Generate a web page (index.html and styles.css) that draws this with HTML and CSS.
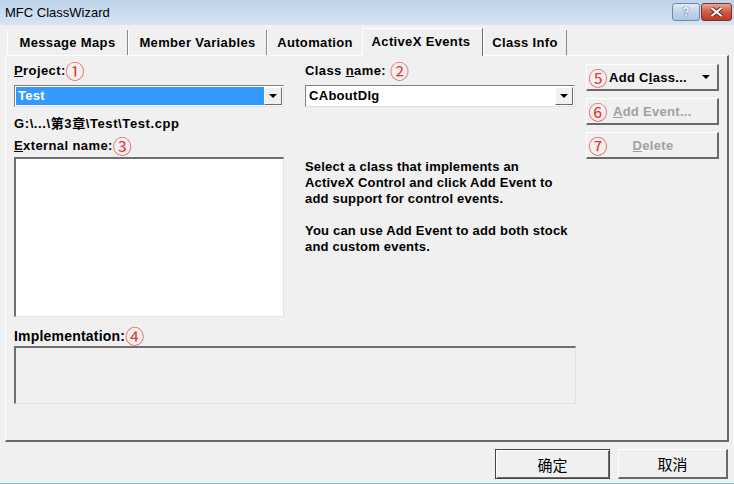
FILE: index.html
```html
<!DOCTYPE html>
<html>
<head>
<meta charset="utf-8">
<link rel="stylesheet" href="styles.css">
</head>
<body>
<div class="window">
  <div class="titlebar">
    <span class="title">MFC ClassWizard</span>
    <div class="caption-btns">
      <span class="cbtn help">?</span>
      <span class="cbtn close"><svg width="13" height="10" viewBox="0 0 13 10"><path d="M1.5 1 L11.5 9 M11.5 1 L1.5 9" stroke="#5a1a10" stroke-width="3.6"/><path d="M1.5 1 L11.5 9 M11.5 1 L1.5 9" stroke="#fff" stroke-width="2.2"/></svg></span>
    </div>
  </div>
  <div class="tabs">
    <div class="tab t1">Message Maps</div>
    <div class="tab t2">Member Variables</div>
    <div class="tab t3">Automation</div>
    <div class="tab t4 active">ActiveX Events</div>
    <div class="tab t5">Class Info</div>
  </div>
  <div class="panel">
    <div class="top">
      <div class="col-left">
        <div class="label"><u>P</u>roject:<span class="num">①</span></div>
        <div class="combo selected"><span class="val">Test</span><span class="drop"><i></i></span></div>
        <div class="path">G:\...\第3章\Test\Test.cpp</div>
        <div class="label ext"><u>E</u>xternal name:<span class="num">③</span></div>
        <div class="listbox"></div>
      </div>
      <div class="col-mid">
        <div class="label">Class <u>n</u>ame: <span class="num">②</span></div>
        <div class="combo"><span class="val">CAboutDlg</span><span class="drop"><i></i></span></div>
        <div class="info">
          <p>Select a class that implements an<br>ActiveX Control and click Add Event to<br>add support for control events.</p>
          <p>You can use Add Event to add both stock<br>and custom events.</p>
        </div>
      </div>
      <div class="col-right">
        <div class="btn"><span class="num">⑤</span><span class="btxt">Add C<u>l</u>ass...</span><span class="arrow"></span></div>
        <div class="btn disabled"><span class="num">⑥</span><span class="btxt">&nbsp;<u>A</u>dd Event...</span></div>
        <div class="btn disabled"><span class="num">⑦</span><span class="btxt center"><u>D</u>elete</span></div>
      </div>
    </div>
    <div class="impl-label">Implementation:<span class="num">④</span></div>
    <div class="impl-box"></div>
  </div>
  <div class="footer">
    <div class="pbtn default">确定</div>
    <div class="pbtn">取消</div>
  </div>
  <div class="bottomline"></div>
</div>
</body>
</html>
```
FILE: styles.css
```css
* { box-sizing: border-box; }
html, body { margin: 0; padding: 0; }
body {
  width: 734px; height: 484px; overflow: hidden;
  background: #f0f0f0;
  font-family: "Liberation Sans", Arial, sans-serif;
  color: #000;
}
.window { width: 734px; height: 484px; display: flex; flex-direction: column; }
.titlebar {
  height: 25px; flex: none;
  background: linear-gradient(#bed3ea, #d6e4f3);
  display: flex; align-items: center; justify-content: space-between;
  padding: 0 2px 0 5px;
}
.title { font-size: 13px; color: #000; white-space: nowrap; }
.caption-btns { display: flex; gap: 1px; align-self: flex-start; margin-top: 3px; }
.cbtn {
  height: 18px; display: flex; align-items: center; justify-content: center;
  border: 1px solid #6d88a8; border-radius: 3px;
}
.help { width: 28px; background: linear-gradient(#e0eaf6, #c2d5ea 50%, #aec6e2); color: #fff; font-size: 12px; font-weight: bold; text-shadow: 0 0 1px #3a5478, 0 0 1px #3a5478; }
.close { width: 31px; background: linear-gradient(#e8a897, #d05a44 50%, #c03a22); border-color: #7a3328; }

.tabs { height: 30px; flex: none; display: flex; align-items: flex-end; padding-left: 7px; }
.tab {
  height: 25px; display: flex; align-items: center; justify-content: center;
  font-weight: bold; font-size: 13px; letter-spacing: 0.35px;
  border-left: 1px solid #fff; border-right: 1px solid #8a8a8a;
}
.t1 { width: 121px; }
.t2 { width: 139px; }
.t3 { width: 95px; border-right: none; }
.t4 { width: 121px; height: 28px; border-top: 1px solid #fff; border-left: 1px solid #fff; border-right: 1px solid #696969; margin-bottom: -1px; background: #f0f0f0; position: relative; z-index: 1; padding-bottom: 2px; padding-right: 3px; }
.t5 { width: 84px; }

.panel {
  flex: none; height: 387px; margin: 0 5px 0 5px;
  border-top: 1px solid #fff; border-left: 1px solid #fff;
  border-right: 2px solid #696969; border-bottom: 2px solid #696969;
  padding: 6px 0 0 8px;
  display: flex; flex-direction: column;
}
.top { display: flex; height: 255px; }
.col-left { width: 270px; display: flex; flex-direction: column; }
.col-mid { width: 270px; margin-left: 21px; display: flex; flex-direction: column; }
.col-right { width: 133px; margin-left: 11px; padding-top: 2px; display: flex; flex-direction: column; gap: 7px; }

.label { font-weight: bold; font-size: 13px; letter-spacing: 0.4px; height: 18px; line-height: 18px; white-space: nowrap; }
.num { color: #e8362c; font-weight: normal; font-size: 19px; letter-spacing: 0; font-family: "Noto Sans CJK SC", sans-serif; line-height: 18px; vertical-align: top; }
.combo {
  margin-top: 5px; height: 22px; display: flex; align-items: stretch;
  border-top: 1px solid #808080; border-left: 1px solid #808080;
  border-right: 1px solid #e0e0e0; border-bottom: 1px solid #e0e0e0;
  background: #fff; padding: 1px;
}
.combo .val { flex: 1; font-weight: bold; font-size: 13px; line-height: 18px; padding-left: 2px; letter-spacing: 0.3px; }
.combo.selected .val { background: #3399ff; color: #fff; }
.drop {
  width: 18px; flex: none; background: #f0f0f0;
  border-top: 1px solid #fff; border-left: 1px solid #fff;
  border-right: 1px solid #696969; border-bottom: 1px solid #696969;
  display: flex; align-items: center; justify-content: center;
}
.drop i { width: 0; height: 0; border-left: 4px solid transparent; border-right: 4px solid transparent; border-top: 4px solid #000; }
.path { margin-top: 9px; font-weight: bold; font-size: 13px; letter-spacing: 0.6px; height: 16px; line-height: 16px; white-space: nowrap; font-family: "Liberation Sans", "Noto Sans CJK SC", sans-serif; }
.ext { margin-top: 5px; }
.listbox {
  margin-top: 2px; height: 160px; width: 270px; background: #fff;
  border-top: 2px solid #6f6f6f; border-left: 2px solid #6f6f6f;
  border-right: 1px solid #e3e3e3; border-bottom: 1px solid #e3e3e3;
}
.info { margin-top: 52px; font-weight: bold; font-size: 13px; letter-spacing: 0.2px; line-height: 16px; white-space: nowrap; }
.info p { margin: 0 0 16px 0; }

.btn {
  height: 27px; display: flex; align-items: center;
  border-top: 1px solid #fff; border-left: 1px solid #fff;
  border-right: 2px solid #6a6a6a; border-bottom: 2px solid #6a6a6a;
  font-weight: bold; font-size: 13px; letter-spacing: 0.3px;
}
.btn .num { width: 22px; text-align: center; flex: none; line-height: 25px; }
.btxt { white-space: nowrap; }
.btxt.center { flex: 1; text-align: center; padding-right: 20px; }
.btn.disabled .btxt { color: #a0a0a0; }
.arrow { margin-left: 15px; width: 0; height: 0; border-left: 4px solid transparent; border-right: 4px solid transparent; border-top: 4px solid #000; }

.impl-label { margin-top: 10px; height: 18px; line-height: 18px; white-space: nowrap; font-weight: bold; font-size: 14px; letter-spacing: 0.2px; }
.impl-box {
  margin-top: 1px; width: 562px; height: 58px;
  border-top: 2px solid #6f6f6f; border-left: 2px solid #6f6f6f;
  border-right: 1px solid #e3e3e3; border-bottom: 1px solid #e3e3e3;
  background: #f0f0f0;
}

.footer { height: 41px; flex: none; display: flex; justify-content: flex-end; gap: 8px; padding: 7px 6px 0 0; }
.pbtn {
  width: 110px; height: 30px; display: flex; align-items: center; justify-content: center;
  font-size: 15px; font-family: "Noto Sans CJK SC", sans-serif;
  border-top: 1px solid #fff; border-left: 1px solid #fff;
  border-right: 2px solid #6a6a6a; border-bottom: 2px solid #6a6a6a;
}
.pbtn.default { width: 115px; border: 1px solid #444; box-shadow: inset 1px 1px 0 #fff, inset -1px -1px 0 #6a6a6a; }
.bottomline { flex: 1; background: #7cc4dd; }
```
